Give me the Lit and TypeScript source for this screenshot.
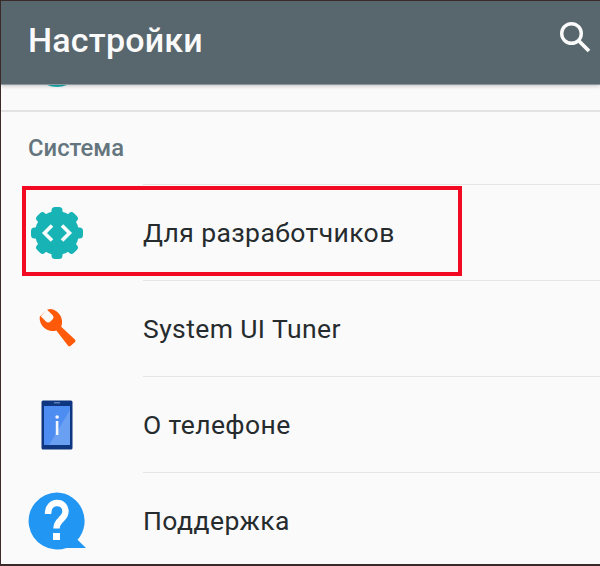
import { LitElement, html, css, svg } from "lit";
import { customElement } from "lit/decorators.js";

const teeth = [0, 45, 90, 135];
const gear = svg`<circle cx="26" cy="26" r="22" fill="#17b3b5"/>${teeth.map(
  (a) => svg`<rect x="20.500" y="0" width="11" height="52" rx="3.500" fill="#17b3b5" transform="rotate(${a} 26 26)"/>`
)}<path fill="none" stroke="#f6fbfb" stroke-width="3.600" d="M21 18.500L13.500 26 21 33.500M31 18.500L38.500 26 31 33.500"/>`;

const icons: Record<string, unknown> = {
  gear: html`<svg class="gear" viewBox="0 0 52 52">${gear}</svg>`,
  wrench: html`<svg class="wrench" viewBox="0 0 40 40"><path fill="#ff5a0a" d="M9.6 1.4l-6.9 6.9a13 13 0 0 0 16.6 13.7l11.6 15 a2 2 0 0 0 2.8 .3l4.1-3.5a2 2 0 0 0 .1-2.9l-13.7-12.7a13 13 0 0 0-10.2-17.6c-1.4 0-2.8.2-3.9.7l5.1 5 a3.5 3.5 0 0 1 0 5l-1.5 1.5a3.5 3.5 0 0 1-5 0l-4.9-5z" transform="translate(0 -.5)"/></svg>`,
  phone: html`<svg class="phone" viewBox="0 0 32 50"><rect x="0.5" y="0.5" width="31" height="49" rx="1.5" fill="#0f3680"/><rect x="3" y="6" width="26" height="39" fill="#4d8cf0"/><path d="M29 10v35H8z" fill="#6aa0f2"/><rect x="13" y="2.2" width="6" height="1.2" fill="#6f8fc0"/><rect x="14.800" y="21" width="2.600" height="14" fill="#f2f7ff"/><circle cx="16.100" cy="17" r="1.800" fill="#f2f7ff"/></svg>`,
  help: html`<svg class="help" viewBox="0 0 58 58"><path fill="#2196f3" d="M29 .5a28.5 28.5 0 1 0 9.5 55.4h19.5l-8.5-8.1A28.5 28.5 0 0 0 29 .5z"/><path fill="none" stroke="#fff" stroke-width="6.400" d="M20 22c0-7 4-11 9-11 5.500 0 8.500 3.500 8.500 8.500 0 8-9 8-9 17"/><rect x="25" y="41" width="7" height="7" fill="#fff"/></svg>`,
};

const rows = [
  { icon: "gear", label: "Для разработчиков" },
  { icon: "wrench", label: "System UI Tuner" },
  { icon: "phone", label: "О телефоне" },
  { icon: "help", label: "Поддержка" },
];

@customElement("app-root")
export class AppRoot extends LitElement {
  static styles = css`
    :host {
      display: block;
      width: 600px;
      height: 566px;
      position: relative;
      overflow: hidden;
      background: #fafafa;
      box-sizing: border-box;
      border-top: 1px solid #3a2a2a;
      border-left: 1px solid #3a2a2a;
      border-bottom: 2px solid #3a2a2a;
      font-family: Roboto, "Noto Sans", sans-serif;
    }
    .bar {
      position: relative;
      z-index: 2;
      height: 84px;
      background: #58666e;
      display: flex;
      align-items: center;
      justify-content: space-between;
      padding: 0 5px 0 27px;
      box-shadow: 0 1px 4px rgba(0, 0, 0, 0.22);
      border-bottom: 1px solid #8a979c;
      box-sizing: border-box;
      flex: none;
    }
    .title {
      font-size: 34px;
      font-weight: 500;
      color: #fafafa;
      letter-spacing: 0.2px;
      line-height: 40px;
      margin-top: -6px;
    }
    .search {
      width: 36px;
      height: 36px;
      margin-top: -8px;
    }
    .peek {
      height: 27px;
      display: flex;
      align-items: flex-end;
      padding: 0 0 23px 30px;
      box-sizing: border-box;
      border-bottom: 2px solid #e2e2e2;
    }
    .peek svg {
      flex: none;
      width: 52px;
      height: 52px;
    }
    .section {
      height: 72px;
      display: flex;
      align-items: center;
      padding-left: 27px;
      font-size: 23.8px;
      font-weight: 500;
      color: #64757e;
      box-sizing: border-box;
    }
    .row {
      height: 96px;
      display: flex;
      align-items: center;
      border-top: 1px solid #e3e6e3;
      box-sizing: border-box;
      margin-left: 142px;
      position: relative;
    }
    .ico {
      position: absolute;
      left: -142px;
      top: 0;
      bottom: 0;
      width: 112px;
      display: flex;
      align-items: center;
      justify-content: center;
    }
    .label {
      font-size: 26.5px;
      color: #262b2e;
      letter-spacing: 0.4px;
    }
    .gear {
      width: 52px;
      height: 52px;
    }
    .wrench {
      width: 40px;
      height: 40px;
    }
    .phone {
      width: 32px;
      height: 50px;
    }
    .help {
      width: 58px;
      height: 58px;
    }
    .mark {
      position: absolute;
      left: 21px;
      top: 185px;
      width: 440px;
      height: 90px;
      border: 4px solid #f10a22;
      box-sizing: border-box;
      z-index: 3;
    }
  `;

  render() {
    return html`
      <div class="bar">
        <span class="title">Настройки</span>
        <svg class="search" viewBox="0 0 36 36" fill="none" stroke="#fafafa">
          <circle cx="12.500" cy="12.500" r="9.800" stroke-width="3.400" />
          <path d="M19.500 19.500L30 30" stroke-width="3.800" />
        </svg>
      </div>
      <div class="peek"><svg viewBox="0 0 52 52"><circle cx="26" cy="26" r="26" fill="#17b3b5" /></svg></div>
      <div class="section">Система</div>
      ${rows.map(
        (r) => html`<div class="row">
          <span class="ico">${icons[r.icon]}</span>
          <span class="label">${r.label}</span>
        </div>`
      )}
      <div class="mark"></div>
    `;
  }
}
